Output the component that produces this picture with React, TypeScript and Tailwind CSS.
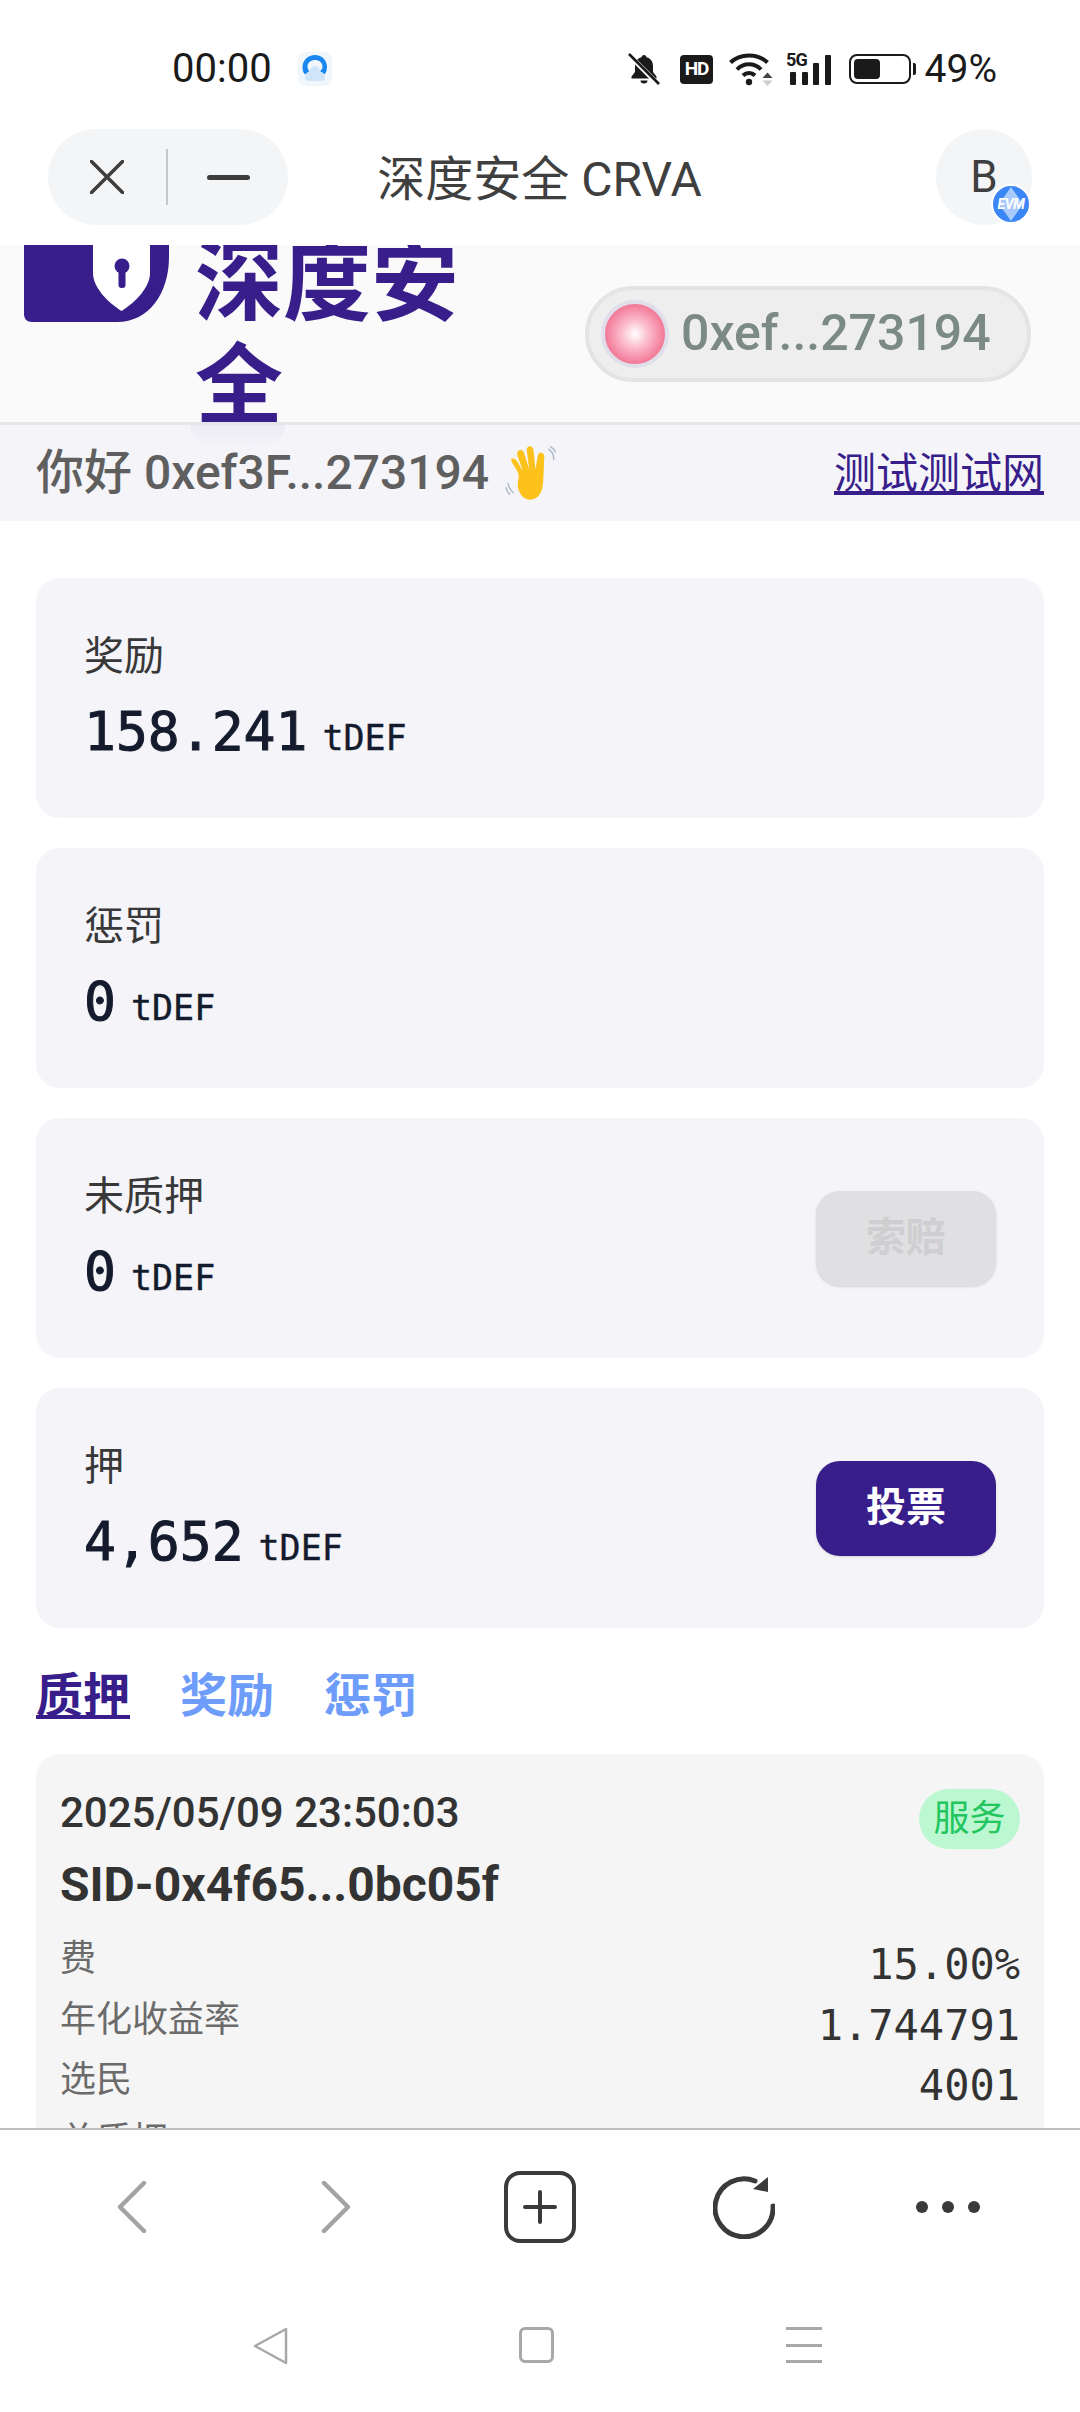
import React from 'react';

const cards = [
  { label: '奖励', value: '158.241' },
  { label: '惩罚', value: '0' },
  { label: '未质押', value: '0', action: '索赔', disabled: true },
  { label: '押', value: '4,652', action: '投票' },
];

const rows = [
  { label: '费', value: '15.00%' },
  { label: '年化收益率', value: '1.744791' },
  { label: '选民', value: '4001' },
  { label: '总质押', value: '' },
];

function BellOff() {
  return (
    <svg width="32" height="32" viewBox="0 0 32 32">
      <path d="M16 2c1.500 0 2.500 1 2.500 2.300C23 5.500 25 9 25 13v6l3.500 4.500v2h-25v-2L7 19v-6c0-4 2-7.500 6.500-8.700C13.500 3 14.500 2 16 2z" fill="#1a1a1a" />
      <path d="M12.500 27.500h7a3.500 3 0 0 1-7 0z" fill="#1a1a1a" />
      <path d="M1 2l29 29" stroke="#fff" strokeWidth="5" />
      <path d="M1 1l30 30" stroke="#1a1a1a" strokeWidth="2.600" />
    </svg>
  );
}

function Wifi() {
  return (
    <svg width="44" height="34" viewBox="0 0 44 34" fill="none">
      <path d="M1.500 10.500C11 1 29 1 38.500 10.500" stroke="#1a1a1a" strokeWidth="4" />
      <path d="M8 17.500C14.500 10.500 25.500 10.500 32 17.500" stroke="#1a1a1a" strokeWidth="4" />
      <path d="M14 23.500c3.500-3.500 8.500-3.500 12 0" stroke="#1a1a1a" strokeWidth="4" />
      <circle cx="20" cy="30" r="3.200" fill="#1a1a1a" />
      <path d="M33.500 26h10l-5-5.500z" fill="#444" />
      <path d="M33.500 28.500h10l-5 5.500z" fill="#ccc" />
    </svg>
  );
}

function Signal() {
  return (
    <div className="relative w-[47px] h-[32px]">
      <span className="absolute left-0 -top-[3px] text-[18px] leading-[20px] font-bold tracking-[-1px] text-[#1a1a1a]">5G</span>
      <div className="absolute inset-0 flex items-end gap-[5.500px] pl-[4px]">
        <div className="w-[6px] h-[13px] bg-[#1a1a1a] rounded-[1px]" />
        <div className="w-[6px] h-[13px] bg-[#1a1a1a] rounded-[1px]" />
        <div className="w-[6px] h-[22px] bg-[#1a1a1a] rounded-[1px]" />
        <div className="w-[6px] h-[30px] bg-[#1a1a1a] rounded-[1px]" />
      </div>
    </div>
  );
}

function Battery() {
  return (
    <div className="flex items-center gap-[2px]">
      <div className="w-[62px] h-[30px] rounded-[8px] border-[2.500px] border-[#1a1a1a] p-[3px]">
        <div className="w-[26px] h-full rounded-[4px] bg-[#1a1a1a]" />
      </div>
      <div className="w-[2.500px] h-[12px] bg-[#1a1a1a] rounded-r-[2px]" />
    </div>
  );
}

function AppIcon() {
  return (
    <svg width="34" height="34" viewBox="0 0 34 34">
      <rect x="0" y="0" width="34" height="34" rx="8" fill="#f1f6fb" />
      <path d="M17 3c7 0 12 5 12 12 0 3-1 5.500-2.500 7.500L22 19c1.500-1 2.500-2.500 2.500-4.500C24.500 10.500 21 8 17 8s-7.500 2.500-7.500 6.500c0 2 .8 3.500 2 4.500L7 22.500C5 20.500 4.500 18 4.500 15 4.500 8 10 3 17 3z" fill="#1a86f0" />
      <path d="M7 26c0-4 3-6 5-6 0-3 2-6 5-6s5 3 5 6c3 0 5 2 5 6 0 1.500-1 3-3 3H10c-2 0-3-1.500-3-3z" fill="#cfe6fa" />
    </svg>
  );
}

function StatusBar() {
  return (
    <div className="h-[120px] shrink-0 bg-white flex items-start justify-between pt-[51px] pl-[172px] pr-[83px]">
      <div className="flex items-center gap-[26px] h-[36px]">
        <span className="text-[40px] leading-[36px] text-[#1a1a1a]">00:00</span>
        <AppIcon />
      </div>
      <div className="flex items-center h-[36px]">
        <BellOff />
        <div className="ml-[20px] w-[33px] h-[29px] bg-[#1a1a1a] rounded-[4px] flex items-center justify-center text-white text-[19px] font-bold tracking-[-1px]">HD</div>
        <div className="ml-[16px]"><Wifi /></div>
        <div className="ml-[13px]"><Signal /></div>
        <div className="ml-[16px]"><Battery /></div>
        <span className="ml-[9px] text-[39px] leading-[36px] text-[#1a1a1a]">49%</span>
      </div>
    </div>
  );
}

function TitleBar() {
  return (
    <div className="h-[125px] shrink-0 bg-white flex items-start justify-between pt-[9px] pl-[48px] pr-[48px]">
      <div className="w-[240px] h-[96px] rounded-full bg-[#f4f5f7] flex items-center pl-[42px]">
        <svg width="34" height="34" viewBox="0 0 34 34" fill="none" stroke="#3d3d3d" strokeWidth="3.500" strokeLinecap="round">
          <path d="M1.500 1.500l31 31M32.500 1.500l-31 31" />
        </svg>
        <div className="ml-[42px] w-[2px] h-[56px] bg-[#c6c7c9]" />
        <div className="ml-[39px] w-[43px] h-[5px] rounded-full bg-[#3d3d3d]" />
      </div>
      <div className="text-[48px] leading-[96px] mt-[3px] text-[#3f3f3f] -ml-[145px]">深度安全 CRVA</div>
      <div className="relative w-[96px] h-[96px] rounded-full bg-[#f4f5f7] flex items-center justify-center text-[44px] text-[#3f3f3f]">
        B
        <div className="absolute right-[1px] bottom-[1px] w-[40px] h-[40px] rounded-full bg-[#3b86f7] border-[2px] border-white flex items-center justify-center overflow-hidden">
          <svg className="absolute" width="24" height="34" viewBox="0 0 24 34">
            <path d="M12 0l12 17-12 17L0 17z" fill="#a9cbfb" />
          </svg>
          <span className="relative text-[14px] leading-none font-bold italic text-white tracking-[-0.5px]">EVM</span>
        </div>
      </div>
    </div>
  );
}

function Logo() {
  return (
    <svg className="self-start shrink-0 -mt-[20px]" width="145" height="97" viewBox="0 0 145 97">
      <path d="M0 0h145v32c0 36-20 65-52 65H8c-5 0-8-3-8-8z" fill="#381e8b" />
      <path d="M69 0h57v48c0 14-14 29-28.500 38C83 77 69 62 69 48z" fill="#fff" />
      <circle cx="98" cy="41" r="7.500" fill="#381e8b" />
      <rect x="94.500" y="41" width="7" height="22" rx="3" fill="#381e8b" />
    </svg>
  );
}

function WaveHand() {
  return (
    <svg width="54" height="54" viewBox="0 0 52 52" fill="none">
      <path d="M13 27C11 21 5 15 6 13s4-1 5.500 1.500l6 10L12 9.500c-.7-3 .3-5.300 2.500-5.600s3.500 1.200 4.300 3.800l4.500 14.800L21 4.500C20.800 2 22 .3 24 .3s3.300 1.700 3.500 4l1.800 18 2.200-12.500c.4-2.500 2-3.700 3.800-3.400s2.700 2 2.500 4.300L37 30c-.3 9-1.500 19-10 21.300s-13-4.800-14.500-11c-1-4.500 1.300-9 .5-13.300z" fill="#fcc21b" />
      <path d="M42 3c3 2 5 6 5 10M44 .8c2 1 3.800 3 4.500 5M3 36c.5 3.500 2.500 7 5 9M1 40c.5 2.500 2 5 3.500 6.500" stroke="#a9b8c4" strokeWidth="1.300" strokeLinecap="round" />
    </svg>
  );
}

function Header() {
  return (
    <div className="relative">
      <div className="h-[177px] bg-[#fafafa] overflow-hidden flex items-center pl-[24px] pr-[49px]">
        <Logo />
        <div className="ml-[26px] w-[270px] shrink-0 text-[88px] leading-[103px] font-bold text-[#381e8b] [overflow-wrap:anywhere]">深度安全</div>
        <div className="ml-auto w-[446px] h-[96px] rounded-full bg-[#eeeeee] border-[4px] border-[#e4e4e4] flex items-center pl-[12px] shrink-0">
          <div className="w-[68px] h-[68px] rounded-full border-[4px] border-[#e0deea] bg-[radial-gradient(circle_at_center,#ffffff_0%,#fbb6c8_35%,#ee5f82_85%,#e8557a_100%)]" />
          <span className="ml-[12px] text-[50px] font-medium text-[#7b8a86]">0xef...273194</span>
        </div>
      </div>
      <div className="h-[3px] bg-[#e5e6ea]" />
      <div className="absolute left-[190px] top-[180px] w-[95px] h-[22px] rounded-b-full bg-gradient-to-b from-[#ecebf5] to-transparent" />
    </div>
  );
}

function Greeting() {
  return (
    <div className="h-[96px] bg-[#f4f4f9] flex items-center justify-between px-[36px]">
      <div className="flex items-center">
        <span className="text-[48px] font-medium text-[#5f5f5f]">你好 0xef3F...273194</span>
        <span className="ml-[16px]"><WaveHand /></span>
      </div>
      <span className="text-[42px] text-[#381e8b] underline">测试测试网</span>
    </div>
  );
}

function StatCard({ label, value, action, disabled }: { label: string; value: string; action?: string; disabled?: boolean }) {
  return (
    <div className="h-[240px] rounded-[24px] bg-[#f4f4f9] flex items-center justify-between pl-[48px] pr-[48px]">
      <div>
        <div className="text-[40px] leading-[60px] text-[#383838]">{label}</div>
        <div className="flex items-baseline mt-[13px] leading-[64px] [font-family:'DejaVu_Sans_Mono',monospace] text-[#141b2d]">
          <span className="text-[53px] [-webkit-text-stroke:1px_#141b2d]">{value}</span>
          <span className="ml-[15px] text-[35px] [-webkit-text-stroke:0.4px_#141b2d]">tDEF</span>
        </div>
      </div>
      {action && (
        <div className={disabled
          ? "w-[180px] h-[95px] rounded-[24px] bg-[#e0e0e2] shadow-sm flex items-center justify-center text-[40px] font-bold text-[#cfcfd1]"
          : "w-[180px] h-[95px] rounded-[24px] bg-[#381e8b] shadow-sm flex items-center justify-center text-[40px] font-bold text-white"}>
          {action}
        </div>
      )}
    </div>
  );
}

function Tabs() {
  return (
    <div className="flex gap-[50px] mt-[37px] text-[47px] leading-[62px] font-bold text-[#6d9cfb]">
      <span className="text-[#381e8b] underline">质押</span>
      <span>奖励</span>
      <span>惩罚</span>
    </div>
  );
}

function StakeCard() {
  return (
    <div className="mt-[27px] rounded-t-[24px] bg-[#f5f5f5] px-[24px] pt-[35px] pb-[24px]">
      <div className="flex items-start justify-between">
        <span className="text-[42px] leading-[48px] font-medium text-[#333333]">2025/05/09 23:50:03</span>
        <span className="w-[101px] h-[60px] rounded-full bg-[#bbf7d0] flex items-center justify-center text-[36px] text-[#22c55e]">服务</span>
      </div>
      <div className="mt-[8px] text-[48px] leading-[56px] font-bold text-[#333333]">SID-0x4f65...0bc05f</div>
      <div className="mt-[21px] flex flex-col">
        {rows.map(r => (
          <div key={r.label} className="h-[60.500px] flex justify-between">
            <span className="text-[36px] leading-[50px] text-[#6b6b6b]">{r.label}</span>
            <span className="text-[42px] leading-[62px] [font-family:'DejaVu_Sans_Mono',monospace] text-[#333333]">{r.value}</span>
          </div>
        ))}
      </div>
    </div>
  );
}

function BrowserBar() {
  return (
    <div className="h-[156px] shrink-0 bg-white border-t-[2px] border-[#bdbfc0] grid grid-cols-5 items-center px-[30px]">
      <div className="flex justify-center">
        <svg width="30" height="52" viewBox="0 0 30 52" fill="none" stroke="#a3a3a6" strokeWidth="4.500" strokeLinecap="round" strokeLinejoin="round">
          <path d="M27 2L3 26l24 24" />
        </svg>
      </div>
      <div className="flex justify-center">
        <svg width="30" height="52" viewBox="0 0 30 52" fill="none" stroke="#a3a3a6" strokeWidth="4.500" strokeLinecap="round" strokeLinejoin="round">
          <path d="M3 2l24 24L3 50" />
        </svg>
      </div>
      <div className="flex justify-center">
        <svg width="72" height="72" viewBox="0 0 72 72" fill="none" stroke="#3a3a3a" strokeLinecap="round">
          <rect x="2" y="2" width="68" height="68" rx="14" strokeWidth="4" />
          <path d="M36 21v30M21 36h30" strokeWidth="4" />
        </svg>
      </div>
      <div className="flex justify-center">
        <svg width="62" height="64" viewBox="0 0 62 64" fill="none">
          <path d="M60 31A29 29 0 1 1 42 6" stroke="#3a3a3a" strokeWidth="5" strokeLinecap="round" />
          <path d="M55 2v15l-15-3z" fill="#3a3a3a" />
        </svg>
      </div>
      <div className="flex justify-center gap-[14px]">
        <div className="w-[12px] h-[12px] rounded-full bg-[#3a3a3a]" />
        <div className="w-[12px] h-[12px] rounded-full bg-[#3a3a3a]" />
        <div className="w-[12px] h-[12px] rounded-full bg-[#3a3a3a]" />
      </div>
    </div>
  );
}

function NavBar() {
  return (
    <div className="h-[128px] shrink-0 bg-white grid grid-cols-3 items-start pl-[136px] pr-[142px] pt-[43px]">
      <div className="flex justify-center">
        <svg width="36" height="38" viewBox="0 0 36 38" fill="none" stroke="#a8a8a8" strokeWidth="2.500" strokeLinejoin="round">
          <path d="M34 2v34L3 19z" />
        </svg>
      </div>
      <div className="flex justify-center">
        <div className="w-[35px] h-[36px] rounded-[6px] border-[3px] border-[#a8a8a8]" />
      </div>
      <div className="flex justify-center">
        <div className="w-[36px] h-[36px] flex flex-col justify-between">
          <div className="h-[3px] bg-[#a8a8a8]" />
          <div className="h-[3px] bg-[#a8a8a8]" />
          <div className="h-[3px] bg-[#a8a8a8]" />
        </div>
      </div>
    </div>
  );
}

export default function App() {
  return (
    <div className="w-[1080px] h-[2412px] overflow-hidden flex flex-col bg-white [font-family:Roboto,'Noto_Sans_CJK_SC',sans-serif]">
      <StatusBar />
      <TitleBar />
      <div className="flex-1 min-h-0 overflow-hidden">
        <Header />
        <Greeting />
        <div className="px-[36px] pt-[57px]">
          <div className="flex flex-col gap-[30px]">
            {cards.map(c => (
              <StatCard key={c.label} {...c} />
            ))}
          </div>
          <Tabs />
          <StakeCard />
        </div>
      </div>
      <BrowserBar />
      <NavBar />
    </div>
  );
}
